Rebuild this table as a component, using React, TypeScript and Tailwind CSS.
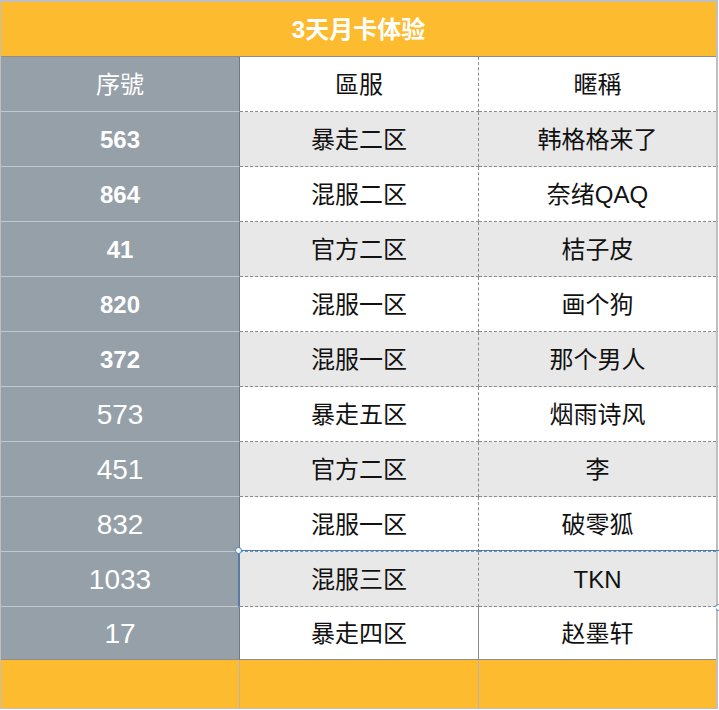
const rows = [
  { id: "563", server: "暴走二区", name: "韩格格来了", strong: true },
  { id: "864", server: "混服二区", name: "奈绪QAQ", strong: true },
  { id: "41", server: "官方二区", name: "桔子皮", strong: true },
  { id: "820", server: "混服一区", name: "画个狗", strong: true },
  { id: "372", server: "混服一区", name: "那个男人", strong: true },
  { id: "573", server: "暴走五区", name: "烟雨诗风", strong: false },
  { id: "451", server: "官方二区", name: "李", strong: false },
  { id: "832", server: "混服一区", name: "破零狐", strong: false },
  { id: "1033", server: "混服三区", name: "TKN", strong: false, selected: true },
  { id: "17", server: "暴走四区", name: "赵墨轩", strong: false },
];

export default function App() {
  return (
    <div className="w-[719px] h-[710px] bg-white font-['Liberation_Sans','Noto_Sans_CJK_SC',sans-serif]">
      <div className="w-[718px] border-t-2 border-l border-r-2 border-[#bfbfbf]">
        <div className="h-[55px] pt-px bg-[#fdbb30] flex items-center justify-center text-white text-[24px] font-bold border-b border-[#8d8d8d]">
          3天月卡体验
        </div>

        <div className="grid grid-cols-[239px_239px_1fr] h-[55px] text-[24px]">
          <div className="bg-[#96a0a9] text-white flex items-center justify-center pt-px border-r border-r-[#6f7780] border-b border-b-[#c4c9ce]">
            序號
          </div>
          <div className="flex items-center justify-center pt-px text-[#111] border-r border-dashed border-r-[#8a8a8a] border-b border-b-[#8a8a8a]">
            區服
          </div>
          <div className="flex items-center justify-center pt-px text-[#111] border-b border-dashed border-b-[#8a8a8a]">
            暱稱
          </div>
        </div>

        {rows.map((row, i) => {
          const last = i === rows.length - 1;
          const stripe = i % 2 === 0 ? "bg-[#e8e8e8]" : "bg-white";
          return (
            <div
              key={row.id}
              className={`relative grid grid-cols-[239px_239px_1fr] text-[24px] ${last ? "h-[53px]" : "h-[55px]"}`}
            >
              <div
                className={`bg-[#96a0a9] text-white flex items-center justify-center pt-px border-r border-r-[#6f7780] ${
                  last ? "border-b border-b-[#8d8d8d]" : "border-b border-b-[#c4c9ce]"
                } ${row.strong ? "font-bold text-[24px]" : "text-[28px]"}`}
              >
                {row.id}
              </div>
              <div
                className={`${stripe} flex items-center justify-center pt-px text-[#111] border-r border-dashed border-r-[#8a8a8a] ${
                  last ? "border-b border-solid border-b-[#8d8d8d]" : "border-b border-b-[#8a8a8a]"
                }`}
              >
                {row.server}
              </div>
              <div
                className={`${stripe} flex items-center justify-center pt-px text-[#111] ${
                  last ? "border-b border-solid border-b-[#8d8d8d]" : "border-b border-dashed border-b-[#8a8a8a]"
                }`}
              >
                {row.name}
              </div>
              {row.selected && (
                <>
                  <div className="absolute left-[237px] -top-[2px] w-[482px] h-[58px] border border-[#3f7fcf] pointer-events-none" />
                  <div className="absolute left-[234px] -top-[5px] w-[7px] h-[7px] rounded-full bg-white border border-[#3f7fcf]" />
                  <div className="absolute left-[714px] top-[52px] w-[7px] h-[7px] rounded-full bg-white border border-[#3f7fcf]" />
                </>
              )}
            </div>
          );
        })}

        <div className="grid grid-cols-[239px_239px_1fr] h-[49px] bg-[#fdbb30] border-b border-[#bdbdbd]">
          <div className="border-r border-[#b5b5b5]" />
          <div className="border-r border-[#b5b5b5]" />
          <div />
        </div>
      </div>
    </div>
  );
}
